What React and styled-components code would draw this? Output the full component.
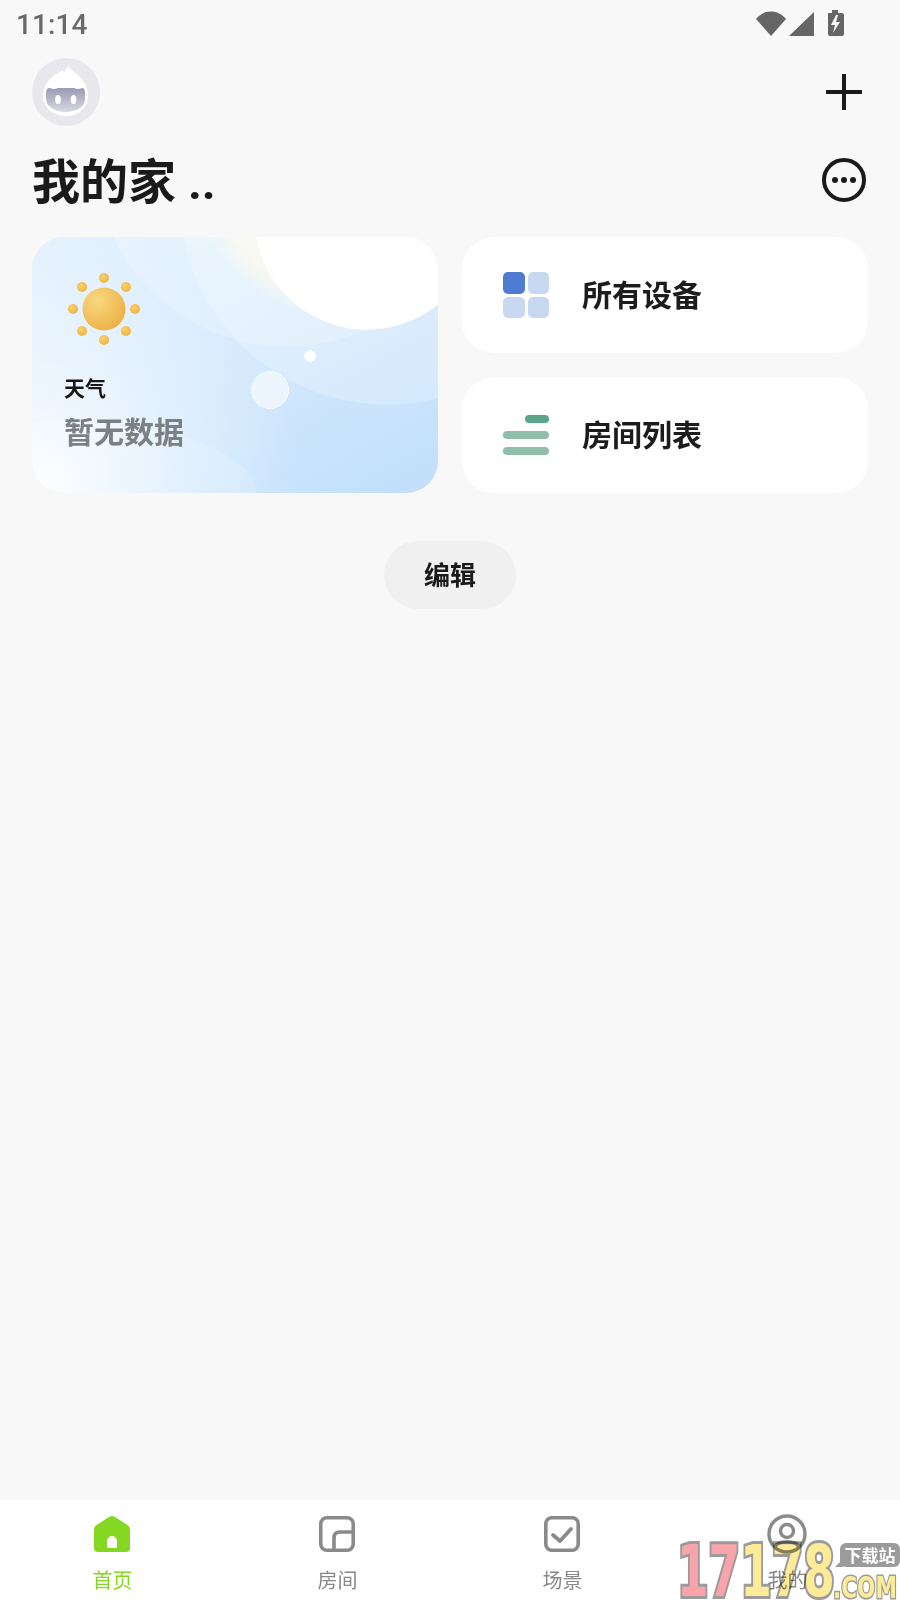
import styled, { createGlobalStyle } from 'styled-components';

const GlobalStyle = createGlobalStyle`
  html, body {
    margin: 0;
    padding: 0;
    background: #f8f8f8;
  }
  * {
    box-sizing: border-box;
  }
`;

const Page = styled.div`
  position: relative;
  width: 900px;
  height: 1600px;
  display: flex;
  flex-direction: column;
  overflow: hidden;
  background: #f8f8f8;
  font-family: Roboto, "Noto Sans CJK SC", sans-serif;
  color: #1a1a1a;
`;

const StatusBar = styled.div`
  height: 58px;
  flex: none;
  display: flex;
  justify-content: space-between;
  padding: 10px 56px 0 16px;
`;

const Clock = styled.div`
  font-size: 28px;
  line-height: 30px;
  font-weight: 500;
  letter-spacing: 0.1px;
  color: #6a6a6a;
`;

const StatusIcons = styled.div`
  display: flex;
  align-items: flex-start;
  height: 26px;
`;

const TopRow = styled.div`
  flex: none;
  height: 68px;
  display: flex;
  align-items: center;
  justify-content: space-between;
  padding: 0 38px 0 32px;
`;

const TitleRow = styled.div`
  flex: none;
  height: 88px;
  margin-top: 10px;
  display: flex;
  align-items: center;
  justify-content: space-between;
  padding: 0 34px 0 32px;
`;

const Title = styled.h1`
  margin: 5px 0 0;
  font-size: 48px;
  line-height: 60px;
  font-weight: 700;
  color: #1a1a1a;
`;

const Cards = styled.div`
  flex: none;
  display: grid;
  grid-template-columns: 406px 406px;
  grid-template-rows: 116px 116px;
  gap: 24px;
  padding-left: 32px;
  margin-top: 13px;
`;

const WeatherCard = styled.div`
  grid-row: 1 / span 2;
  border-radius: 32px;
  padding: 36px 33px 0 32px;
  background:
    radial-gradient(circle 6px at 278px 119px, #fff 94%, transparent 100%),
    radial-gradient(circle 19px at 238px 153px, rgba(255, 255, 255, 0.58) 95%, rgba(255, 255, 255, 0.8) 96%, rgba(255, 255, 255, 0.8) 99%, transparent 100%),
    radial-gradient(circle 113px at 335px -20px, #fff 99.4%, transparent 100%),
    radial-gradient(circle 132px at 298px -57px, rgba(250, 250, 238, 0.85) 84%, rgba(250, 250, 240, 0.15) 99.4%, transparent 100%),
    radial-gradient(circle 193px at 255px -83px, rgba(255, 255, 255, 0.2) 99.6%, transparent 100%),
    radial-gradient(circle 208px at 355px -40px, rgba(255, 255, 255, 0.22) 99.6%, transparent 100%),
    radial-gradient(ellipse 195px 72px at 30px 256px, rgba(255, 255, 255, 0.14) 99%, transparent 100%),
    radial-gradient(circle 270px at 0px 256px, rgba(255, 255, 255, 0.98) 0%, rgba(255, 255, 255, 0.4) 50%, transparent 100%),
    linear-gradient(152deg, #e4f2fe 0%, #d6eafd 45%, #c0dffb 100%);
`;

const SunIcon = styled.svg`
  display: block;
  width: 72px;
  height: 72px;
  margin-left: 4px;
`;

const WeatherLabel = styled.div`
  margin-top: 30px;
  font-size: 21px;
  line-height: 28px;
  font-weight: 700;
  color: #151515;
`;

const WeatherValue = styled.div`
  margin-top: 10px;
  font-size: 30px;
  line-height: 40px;
  font-weight: 700;
  color: #7b8085;
`;

const LinkCard = styled.div`
  display: flex;
  align-items: center;
  gap: 33px;
  padding-left: 41px;
  border-radius: 32px;
  background: #fff;
`;

const LinkLabel = styled.div`
  margin-top: 2px;
  font-size: 30px;
  line-height: 40px;
  font-weight: 700;
  color: #1c1c1c;
`;

const TileGrid = styled.div`
  width: 46px;
  height: 46px;
  display: grid;
  grid-template-columns: 1fr 1fr;
  gap: 3px;
`;

const Tile = styled.span`
  border-radius: 5px;
  background: ${props => props.$active ? '#4f7bd0' : '#c9d8f1'};
`;

const BarStack = styled.div`
  width: 46px;
  display: flex;
  flex-direction: column;
  align-items: flex-end;
  gap: 8px;
`;

const Bar = styled.span`
  height: 8px;
  border-radius: 4px;
  width: ${props => props.$short ? '24px' : '46px'};
  background: ${props => props.$short ? '#5aa48a' : '#8dbfaa'};
`;

const EditWrap = styled.div`
  flex: none;
  display: flex;
  justify-content: center;
  margin-top: 48px;
`;

const EditButton = styled.div`
  width: 132px;
  height: 68px;
  padding-bottom: 4px;
  border-radius: 34px;
  display: flex;
  align-items: center;
  justify-content: center;
  background: #f0f0f0;
  font-size: 26px;
  font-weight: 700;
  color: #1a1a1a;
`;

const Spacer = styled.div`
  flex: 1;
`;

const TabBar = styled.div`
  flex: none;
  height: 100px;
  display: grid;
  grid-template-columns: repeat(4, 225px);
  background: #fff;
`;

const Tab = styled.div`
  display: flex;
  flex-direction: column;
  align-items: center;
  padding-top: 14px;
  color: ${props => props.$active ? '#84d821' : '#888'};
`;

const TabIcon = styled.svg`
  display: block;
  width: 40px;
  height: 40px;
  margin-left: -1px;
`;

const TabLabel = styled.div`
  margin-top: 13px;
  font-size: 20px;
  line-height: 28px;
`;

const Watermark = styled.div`
  position: absolute;
  left: 677px;
  bottom: 0;
  width: 223px;
  height: 60px;
  pointer-events: none;
  mix-blend-mode: multiply;
  font-family: "DejaVu Sans", sans-serif;
  font-weight: 700;
`;

const Digits = styled.div`
  position: absolute;
  left: 0;
  top: 2px;
  display: flex;
  height: 58px;
  font-size: 72px;
  line-height: 58px;
  transform: scaleX(0.63);
  transform-origin: left center;
  -webkit-text-stroke: 6px #9b9b9b;
  paint-order: stroke fill;
`;

const Digit = styled.span`
  color: ${props => props.$pink ? '#fba3ab' : '#fdeb98'};
`;

const Bubble = styled.div`
  position: absolute;
  right: 0;
  top: 3px;
  width: 60px;
  height: 24px;
  border-radius: 6px;
  display: flex;
  align-items: center;
  justify-content: center;
  background: #9b9b9b;
  color: #fff;
  font-family: "Noto Sans CJK SC", sans-serif;
  font-size: 17px;
  line-height: 24px;

  &::after {
    content: '';
    position: absolute;
    left: -5px;
    bottom: 0;
    border-style: solid;
    border-width: 0 0 8px 8px;
    border-color: transparent transparent #9b9b9b transparent;
  }
`;

const Domain = styled.div`
  position: absolute;
  right: 0;
  top: 36px;
  width: 67px;
  height: 24px;
  font-size: 30px;
  line-height: 24px;
  white-space: nowrap;
  transform: scaleX(0.72);
  transform-origin: left center;
  color: #fdeb98;
  -webkit-text-stroke: 3px #9b9b9b;
  paint-order: stroke fill;
`;

const sunDots = [0, 45, 90, 135, 180, 225, 270, 315];

const Sun = () => (
  <SunIcon viewBox="0 0 72 72">
    <defs>
      <radialGradient id="sunBody" cx="0.35" cy="0.3" r="0.8">
        <stop offset="0" stopColor="#f9d880" />
        <stop offset="1" stopColor="#ecae42" />
      </radialGradient>
      <radialGradient id="sunDot" cx="0.4" cy="0.35" r="0.8">
        <stop offset="0" stopColor="#f9d268" />
        <stop offset="1" stopColor="#ecad3e" />
      </radialGradient>
    </defs>
    {sunDots.map((deg) => (
      <circle
        key={deg}
        cx={36 + 31 * Math.cos(deg * Math.PI / 180)}
        cy={36 + 31 * Math.sin(deg * Math.PI / 180)}
        r="5"
        fill="url(#sunDot)"
      />
    ))}
    <circle cx="36" cy="36" r="21.5" fill="url(#sunBody)" />
  </SunIcon>
);

const Avatar = () => (
  <svg width="68" height="68" viewBox="0 0 68 68">
    <defs>
      <linearGradient id="face" x1="0" y1="0" x2="0" y2="1">
        <stop offset="0" stopColor="#9b9ab4" />
        <stop offset="1" stopColor="#d9d9e2" />
      </linearGradient>
    </defs>
    <circle cx="34" cy="34" r="34" fill="#e8e8ec" />
    <path d="M36 8 L42 14 C50 19 56 28 56 38 C56 50 46 58 34 58 C22 58 11 50 11 38 C11 28 17 20 26 15 L30 12 L32 14 Z" fill="#fff" />
    <path d="M18 30 Q22 32 26 30 H42 Q46 32 50 30 Q53 30 53 35 V41 C53 49 44 54 34 54 C24 54 14 49 14 41 V35 Q14 30 18 30 Z" fill="url(#face)" />
    <ellipse cx="26" cy="41.5" rx="2.8" ry="4.6" fill="#fff" />
    <ellipse cx="41.5" cy="41.5" rx="2.8" ry="4.6" fill="#fff" />
  </svg>
);

const App = () => (
  <>
    <GlobalStyle />
    <Page>
      <StatusBar>
        <Clock>11:14</Clock>
        <StatusIcons>
          <svg width="88" height="28" viewBox="0 0 88 28">
            <path d="M0 9 C8 -1 22 -1 30 9 L15 26 Z" fill="#666" />
            <path d="M33 26 L58 2 V26 Z" fill="#666" />
            <path fillRule="evenodd" d="M72 3 H76 V0 H82 V3 H86 Q88 3 88 5 V24 Q88 26 86 26 H74 Q72 26 72 24 Z M80 5 L75 15 H79 L77 23 L84 12 H80 L82 5 Z" fill="#666" />
          </svg>
        </StatusIcons>
      </StatusBar>

      <TopRow>
        <Avatar />
        <svg width="36" height="36" viewBox="0 0 36 36">
          <path d="M18 1 V35 M1 18 H35" stroke="#1a1a1a" strokeWidth="4" strokeLinecap="round" />
        </svg>
      </TopRow>

      <TitleRow>
        <Title>我的家 ..</Title>
        <svg width="44" height="44" viewBox="0 0 44 44">
          <circle cx="22" cy="22" r="20" fill="none" stroke="#1a1a1a" strokeWidth="4" />
          <circle cx="13" cy="22" r="3" fill="#1a1a1a" />
          <circle cx="22" cy="22" r="3" fill="#1a1a1a" />
          <circle cx="31" cy="22" r="3" fill="#1a1a1a" />
        </svg>
      </TitleRow>

      <Cards>
        <WeatherCard>
          <Sun />
          <WeatherLabel>天气</WeatherLabel>
          <WeatherValue>暂无数据</WeatherValue>
        </WeatherCard>
        <LinkCard>
          <TileGrid>
            <Tile $active />
            <Tile />
            <Tile />
            <Tile />
          </TileGrid>
          <LinkLabel>所有设备</LinkLabel>
        </LinkCard>
        <LinkCard>
          <BarStack>
            <Bar $short />
            <Bar />
            <Bar />
          </BarStack>
          <LinkLabel>房间列表</LinkLabel>
        </LinkCard>
      </Cards>

      <EditWrap>
        <EditButton>编辑</EditButton>
      </EditWrap>

      <Spacer />

      <TabBar>
        <Tab $active>
          <TabIcon viewBox="0 0 40 40">
            <path fillRule="evenodd" d="M17.5 2.8 Q20 1.2 22.5 2.8 L35.5 11 Q38 12.6 38 15.5 V34 Q38 38 34 38 H6 Q2 38 2 34 V15.5 Q2 12.6 4.5 11 Z M15 34 H25 V27 A5 5 0 0 0 15 27 Z" fill="#84d821" />
          </TabIcon>
          <TabLabel>首页</TabLabel>
        </Tab>
        <Tab>
          <TabIcon viewBox="0 0 40 40" fill="none" stroke="#8a8a8a" strokeWidth="3.6">
            <rect x="3.8" y="3.8" width="32.4" height="32.4" rx="6" />
            <path d="M17 36 V24 Q17 18 23 18 H36" />
          </TabIcon>
          <TabLabel>房间</TabLabel>
        </Tab>
        <Tab>
          <TabIcon viewBox="0 0 40 40" fill="none" stroke="#8a8a8a" strokeWidth="3.6">
            <rect x="3.8" y="3.8" width="32.4" height="32.4" rx="6" />
            <path d="M11 21 L18 27 L29 15" strokeWidth="3.8" strokeLinecap="round" strokeLinejoin="round" />
          </TabIcon>
          <TabLabel>场景</TabLabel>
        </Tab>
        <Tab>
          <TabIcon viewBox="0 0 40 40" fill="none" stroke="#8a8a8a" strokeWidth="3.4">
            <circle cx="20" cy="20" r="18" />
            <circle cx="20" cy="17" r="6.5" />
            <path d="M8 33 C11 26 29 26 32 33" />
          </TabIcon>
          <TabLabel>我的</TabLabel>
        </Tab>
      </TabBar>

      <Watermark>
        <Digits>
          <Digit $pink>1</Digit>
          <Digit $pink>7</Digit>
          <Digit>1</Digit>
          <Digit>7</Digit>
          <Digit>8</Digit>
        </Digits>
        <Bubble>下载站</Bubble>
        <Domain>.COM</Domain>
      </Watermark>
    </Page>
  </>
);

export default App;
